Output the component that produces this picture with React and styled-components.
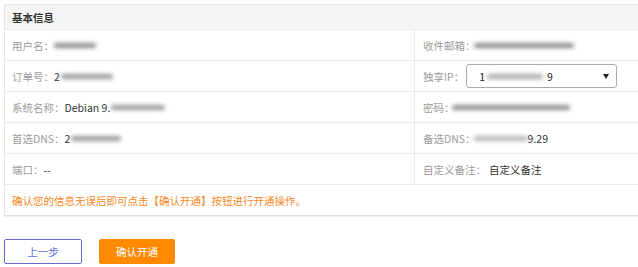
import React from "react";
import styled, { createGlobalStyle } from "styled-components";

const GlobalStyle = createGlobalStyle`
  body {
    margin: 0;
    background: #fff;
    font-family: "Noto Sans CJK SC", "Noto Sans", sans-serif;
  }
`;

const Page = styled.div`
  width: 638px;
  height: 267px;
  overflow: hidden;
  padding: 4px 0 0 4px;
  box-sizing: border-box;
`;

const Table = styled.div`
  width: 644px;
  border: 1px solid #e6e6e6;
  border-bottom-color: #dedede;
  box-shadow: 0 1px 0 #f0f0f0;
`;

const Head = styled.div`
  height: 24px;
  display: flex;
  align-items: center;
  padding-left: 7px;
  background: #f5f5f6;
  font-size: 10.5px;
  font-weight: bold;
  color: #333;
`;

const Row = styled.div`
  display: grid;
  grid-template-columns: 409px 1fr;
  height: 31px;
  border-top: 1px solid #ebebeb;
  box-sizing: border-box;
`;

const Cell = styled.div`
  display: flex;
  align-items: center;
  padding-left: ${(p) => (p.right ? "8px" : "7px")};
  border-left: ${(p) => (p.right ? "1px solid #ebebeb" : "none")};
  font-size: 10.5px;
  white-space: nowrap;
`;

const Label = styled.span`
  color: #9a9a9a;
  margin-right: ${(p) => p.gap || 0}px;
`;

const Value = styled.span`
  color: #333;
`;

const Blur = styled.span`
  display: inline-block;
  width: ${(p) => p.w}px;
  height: 5px;
  margin-left: ${(p) => p.ml || 0}px;
  margin-right: ${(p) => p.mr || 0}px;
  border-radius: 3px;
  background: ${(p) => p.c || "#9d9d9d"};
  filter: blur(2px);
`;

const Notice = styled.div`
  height: 30px;
  display: flex;
  align-items: center;
  padding-left: 7px;
  border-top: 1px solid #ebebeb;
  font-size: 10.5px;
  color: #f5891f;
`;

const Select = styled.div`
  width: 151px;
  height: 24px;
  box-sizing: border-box;
  border: 1px solid #aaa;
  border-radius: 3px;
  display: flex;
  align-items: center;
  padding: 0 7px 0 12px;
  font-size: 10.5px;
  color: #222;
`;

const Arrow = styled.span`
  margin-left: auto;
  width: 0;
  height: 0;
  border-left: 3px solid transparent;
  border-right: 3px solid transparent;
  border-top: 5px solid #222;
`;

const Actions = styled.div`
  display: flex;
  gap: 17px;
  margin-top: 23px;
`;

const Button = styled.button`
  width: ${(p) => p.w}px;
  height: 25px;
  box-sizing: border-box;
  border-radius: 2px;
  font-family: inherit;
  font-size: 10.5px;
  padding: 0;
  border: 1px solid ${(p) => (p.primary ? "#ff8a00" : "#6468cf")};
  background: ${(p) => (p.primary ? "#ff8a00" : "#fff")};
  color: ${(p) => (p.primary ? "#fff" : "#5a6fd6")};
`;

export default function App() {
  return (
    <Page>
      <GlobalStyle />
      <Table>
        <Head>基本信息</Head>
        <Row>
          <Cell>
            <Label>用户名：</Label>
            <Blur w={42} c="#8a8a8a" />
          </Cell>
          <Cell right>
            <Label>收件邮箱：</Label>
            <Blur w={100} ml={-2} c="#8a8a8a" />
          </Cell>
        </Row>
        <Row>
          <Cell>
            <Label>订单号：</Label>
            <Value>2</Value>
            <Blur w={52} ml={1} c="#999" />
          </Cell>
          <Cell right>
            <Label gap={2}>独享IP：</Label>
            <Select>
              <span>1</span>
              <Blur w={56} ml={2} mr={4} c="#aaa" />
              <span>9</span>
              <Arrow />
            </Select>
          </Cell>
        </Row>
        <Row>
          <Cell>
            <Label>系统名称：</Label>
            <Value>Debian 9.</Value>
            <Blur w={54} ml={1} c="#999" />
          </Cell>
          <Cell right>
            <Label>密码：</Label>
            <Blur w={118} ml={-3} c="#8c8c8c" />
          </Cell>
        </Row>
        <Row>
          <Cell>
            <Label>首选DNS：</Label>
            <Value>2</Value>
            <Blur w={50} ml={1} c="#999" />
          </Cell>
          <Cell right>
            <Label>备选DNS：</Label>
            <Blur w={54} ml={-2} c="#b5b5b5" />
            <Value>9.29</Value>
          </Cell>
        </Row>
        <Row>
          <Cell>
            <Label>端口：</Label>
            <Value>--</Value>
          </Cell>
          <Cell right>
            <Label gap={3}>自定义备注：</Label>
            <Value>自定义备注</Value>
          </Cell>
        </Row>
        <Notice>确认您的信息无误后即可点击【确认开通】按钮进行开通操作。</Notice>
      </Table>
      <Actions>
        <Button w={78}>上一步</Button>
        <Button primary w={76}>确认开通</Button>
      </Actions>
    </Page>
  );
}
